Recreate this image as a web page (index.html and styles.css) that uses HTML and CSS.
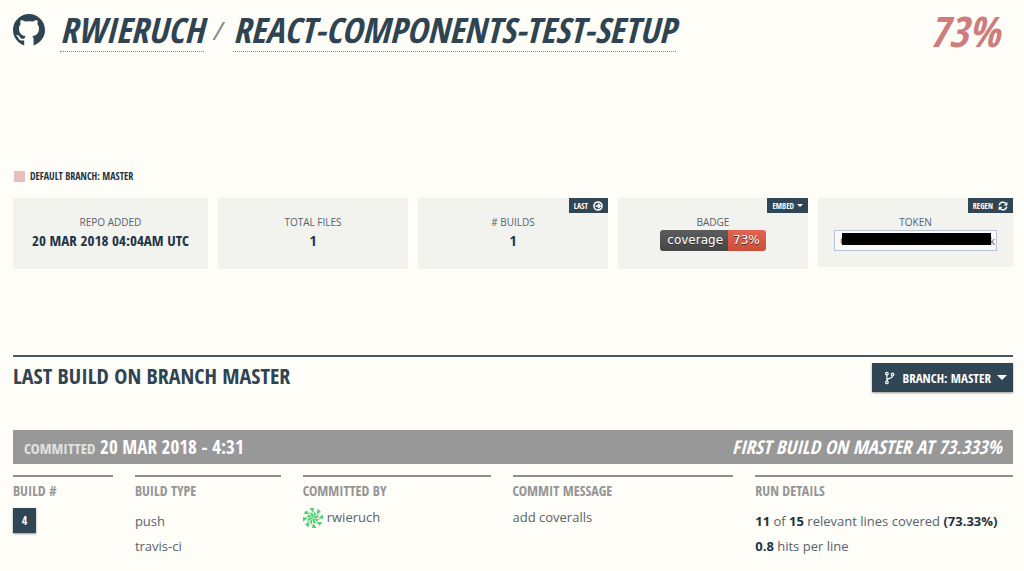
FILE: index.html
```html
<!DOCTYPE html>
<html lang="en">
<head>
    <meta charset="UTF-8">
    <meta name="viewport" content="width=device-width, initial-scale=1.0">
    <title>rwieruch/react-components-test-setup</title>
    <link rel="stylesheet" href="styles.css">
</head>
<body>
    <header class="repo-header">
        <svg class="github-icon" viewBox="0 0 16 16" aria-hidden="true">
            <path d="M8 0C3.580 0 0 3.580 0 8c0 3.200 1.900 6.300 5.600 7.700V13.200C3.900 13.500 3.100 12.900 2.800 12.200 2.500 11.600 2.200 11.200 1.800 10.900c-.3-.3 0-.5.4-.4.6.1 1 .6 1.300 1.100.5.8 1.200.9 2.200.6.1-.5.3-.8.6-1.100C4.400 10.800 3 9.900 3 7.300c0-.9.300-1.600.8-2.200-.2-.6-.2-1.300.1-2.100.8 0 1.500.4 2.200.8a8 8 0 0 1 3.800 0c.7-.4 1.400-.8 2.200-.8.3.8.3 1.500.1 2.100.5.6.8 1.300.8 2.200 0 2.600-1.400 3.500-3.300 3.800.4.4.6.9.6 1.600v3C14.100 14.300 16 11.200 16 8c0-4.420-3.580-8-8-8z"/>
        </svg>
        <h1>
            <a href="#">RWIERUCH</a>
            <span class="slash">/</span>
            <a href="#">REACT-COMPONENTS-TEST-SETUP</a>
        </h1>
        <div class="coverage">73%</div>
    </header>

    <div class="legend"><span class="swatch"></span>DEFAULT BRANCH: MASTER</div>

    <section class="stats">
        <div class="stat">
            <div class="label">REPO ADDED</div>
            <div class="value">20 MAR 2018 04:04AM UTC</div>
        </div>
        <div class="stat">
            <div class="label">TOTAL FILES</div>
            <div class="value">1</div>
        </div>
        <div class="stat">
            <a class="corner" href="#">LAST
                <svg viewBox="0 0 16 16" aria-hidden="true">
                    <circle cx="8" cy="8" r="6.5" fill="none" stroke="#fff" stroke-width="2.4"/>
                    <path d="M4 8h7M8 4.500l3.500 3.500-3.500 3.500" fill="none" stroke="#fff" stroke-width="2.400"/>
                </svg>
            </a>
            <div class="label"># BUILDS</div>
            <div class="value">1</div>
        </div>
        <div class="stat">
            <button class="corner" type="button">EMBED <span class="caret"></span></button>
            <div class="label">BADGE</div>
            <div class="badge"><span class="badge-name">coverage</span><span class="badge-value">73%</span></div>
        </div>
        <div class="stat token">
            <button class="corner" type="button">REGEN
                <svg viewBox="0 0 16 16" aria-hidden="true">
                    <path d="M2 7a6 6 0 0 1 10.500-3M14 9a6 6 0 0 1-10.500 3" fill="none" stroke="#fff" stroke-width="2.400"/>
                    <path d="M15 1v6H9zM1 15V9h6z" fill="#fff"/>
                </svg>
            </button>
            <label class="label" for="token">TOKEN</label>
            <div class="token-box">
                <input id="token" type="text" value="C" readonly>
                <span class="token-end">k</span>
                <span class="redacted"></span>
            </div>
        </div>
    </section>

    <section class="last-build">
        <div class="section-title">
            <h2>LAST BUILD ON BRANCH MASTER</h2>
            <button class="branch-button" type="button">
                <svg viewBox="0 0 12 16" aria-hidden="true">
                    <g fill="none" stroke="#fff" stroke-width="1.3">
                        <circle cx="3" cy="3" r="1.500"/>
                        <circle cx="3" cy="13" r="1.500"/>
                        <circle cx="9.500" cy="4" r="1.500"/>
                        <path d="M3 4.500v7M9.500 5.500c0 4-6.500 2-6.500 5.500"/>
                    </g>
                </svg>
                BRANCH: MASTER
                <span class="caret"></span>
            </button>
        </div>

        <div class="commit-bar">
            <div><span class="committed">COMMITTED</span> 20 MAR 2018 - 4:31</div>
            <div class="summary">FIRST BUILD ON MASTER AT 73.333%</div>
        </div>

        <div class="details">
            <div class="detail">
                <h3>BUILD #</h3>
                <a class="build-number" href="#">4</a>
            </div>
            <div class="detail spaced">
                <h3>BUILD TYPE</h3>
                <p>push</p>
                <p>travis-ci</p>
            </div>
            <div class="detail">
                <h3>COMMITTED BY</h3>
                <p class="author">
                    <svg viewBox="0 0 20 20" aria-hidden="true">
                        <defs>
                            <g id="petal">
                                <path d="M6.500 0h4.500L10 5zM6 4l4 1.500V10z"/>
                            </g>
                        </defs>
                        <g fill="#4fce74">
                            <use href="#petal"/>
                            <use href="#petal" transform="rotate(45 10 10)"/>
                            <use href="#petal" transform="rotate(90 10 10)"/>
                            <use href="#petal" transform="rotate(135 10 10)"/>
                            <use href="#petal" transform="rotate(180 10 10)"/>
                            <use href="#petal" transform="rotate(225 10 10)"/>
                            <use href="#petal" transform="rotate(270 10 10)"/>
                            <use href="#petal" transform="rotate(315 10 10)"/>
                        </g>
                    </svg>
                    rwieruch
                </p>
            </div>
            <div class="detail">
                <h3>COMMIT MESSAGE</h3>
                <p>add coveralls</p>
            </div>
            <div class="detail spaced">
                <h3>RUN DETAILS</h3>
                <p><b>11</b> of <b>15</b> relevant lines covered <b>(73.33%)</b></p>
                <p><b>0.8</b> hits per line</p>
            </div>
        </div>
    </section>
</body>
</html>
```
FILE: styles.css
```css
* {
    box-sizing: border-box;
}
body {
    margin: 0;
    padding: 8px 11px 0 13px;
    background-color: #fefdf8;
    color: #56636e;
    font-family: "Open Sans", sans-serif;
    font-size: 13px;
}
h1, h2, h3, .coverage, .legend, .value, .corner, .branch-button, .commit-bar, .build-number {
    margin: 0;
    font-family: "Open Sans Condensed", "Roboto Condensed", "Liberation Sans Narrow", "Liberation Sans", sans-serif;
    font-weight: bold;
    white-space: nowrap;
}
a {
    color: inherit;
    text-decoration: none;
}
.repo-header {
    display: flex;
    align-items: center;
    height: 44px;
    color: #2e4452;
}
.github-icon {
    width: 32px;
    height: 32px;
    margin-right: 15px;
    fill: #2e4452;
}
h1 {
    display: flex;
    gap: 10px;
    font-size: 35px;
    font-style: italic;
    line-height: 42px;
}
h1 a {
    border-bottom: 1px dotted #888;
}
.slash {
    color: #888;
    font-family: "Open Sans", sans-serif;
    font-size: 26px;
    font-weight: normal;
}
.coverage {
    margin-left: auto;
    padding-right: 13px;
    color: #cd7d7c;
    font-size: 42px;
    font-style: italic;
}
.legend {
    display: flex;
    align-items: center;
    gap: 5px;
    margin-top: 116px;
    padding-left: 1px;
    color: #1d3345;
    font-size: 10px;
    line-height: 16px;
}
.swatch {
    width: 11px;
    height: 11px;
    background-color: #e6c0bd;
}
.stats {
    display: grid;
    grid-template-columns: 39fr 38fr 38fr 38fr 39fr;
    gap: 10px;
    align-items: start;
    margin-top: 14px;
}
.stat {
    position: relative;
    height: 71px;
    padding-top: 16px;
    background-color: #f2f2ef;
    text-align: center;
}
.token {
    height: 69px;
}
.label {
    display: block;
    font-size: 10px;
    line-height: 16px;
}
.value {
    color: #1d3345;
    font-size: 15px;
    line-height: 20px;
}
.corner {
    position: absolute;
    top: 0;
    right: 0;
    display: flex;
    align-items: center;
    gap: 5px;
    height: 15px;
    padding: 0 5px;
    border: 0;
    background-color: #304654;
    color: #fff;
    font-size: 8px;
}
.corner svg {
    width: 10px;
    height: 10px;
}
.caret {
    border: 3px solid transparent;
    border-top-color: #fff;
    border-bottom: 0;
}
.corner .caret {
    margin-left: -2px;
}
.badge {
    display: inline-flex;
    height: 21px;
    border-radius: 3px;
    overflow: hidden;
    color: #fff;
    font-family: "DejaVu Sans", sans-serif;
    font-size: 12px;
    line-height: 21px;
    text-shadow: 0 1px #333;
}
.badge-name {
    padding: 0 5px 0 7px;
    background: linear-gradient(#5c5c5c, #464646);
}
.badge-value {
    padding: 0 6px 0 5px;
    background: linear-gradient(#e26350, #cb4c39);
}
.token-box {
    position: relative;
    margin: 0 16px;
    font-size: 11px;
}
.token-box input {
    display: block;
    width: 100%;
    height: 21px;
    padding: 0 5px;
    border: 1px solid #b9c3d6;
    background-color: #fafafa;
    color: #56636e;
    font: inherit;
}
.token-end {
    position: absolute;
    top: 3px;
    right: 2px;
}
.redacted {
    position: absolute;
    top: 3px;
    left: 8px;
    right: 6px;
    height: 12px;
    background-color: #000;
}
.last-build {
    margin-top: 86px;
    border-top: 2px solid #465b68;
}
.section-title {
    display: flex;
    justify-content: space-between;
    align-items: flex-start;
    padding-top: 6px;
}
h2 {
    color: #2e4452;
    font-size: 22px;
    line-height: 24px;
}
.branch-button {
    display: flex;
    align-items: center;
    gap: 6px;
    height: 29px;
    padding: 0 6px 0 12px;
    border: 0;
    background-color: #304654;
    box-shadow: 0 1px 2px #999;
    color: #fff;
    font-size: 13px;
}
.branch-button svg {
    width: 11px;
    height: 14px;
    margin-right: 2px;
}
.branch-button .caret {
    border-width: 5px;
    border-bottom: 0;
}
.commit-bar {
    display: flex;
    justify-content: space-between;
    height: 34px;
    margin-top: 38px;
    padding: 0 11px;
    background-color: #989898;
    color: #fff;
    font-size: 19px;
    line-height: 34px;
}
.committed {
    color: #e2e2e2;
    font-size: 15px;
    line-height: 1;
}
.summary {
    font-style: italic;
}
.details {
    display: grid;
    grid-template-columns: 100fr 146fr 188fr 221fr 258fr;
    gap: 22px;
    margin-top: 11px;
}
.detail {
    min-width: 0;
    border-top: 2px solid #8d8d8d;
}
h3 {
    margin-bottom: 4px;
    padding-top: 4px;
    color: #959595;
    font-size: 14px;
    line-height: 20px;
}
.detail p {
    margin: 0;
    font-size: 13px;
    line-height: 25px;
    white-space: nowrap;
}
.spaced h3 {
    margin-bottom: 8px;
}
.build-number {
    display: block;
    width: 23px;
    margin-top: 7px;
    background-color: #304654;
    box-shadow: 0 1px 2px #999;
    color: #fff;
    font-size: 12px;
    line-height: 25px;
    text-align: center;
}
.author {
    display: flex;
    align-items: center;
    gap: 4px;
}
.author svg {
    width: 20px;
    height: 20px;
}
b {
    color: #1d3345;
}
```
